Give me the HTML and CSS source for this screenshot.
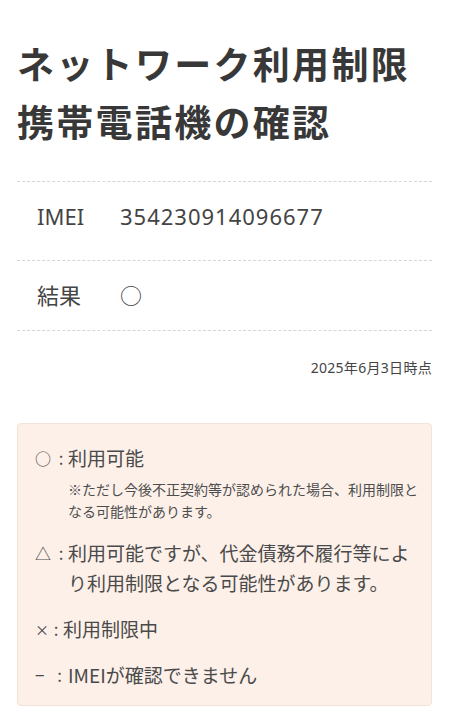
FILE: index.html
```html
<!DOCTYPE html>
<html lang="ja">
<head>
<meta charset="utf-8">
<title>ネットワーク利用制限携帯電話機の確認</title>
<link rel="stylesheet" href="styles.css">
</head>
<body>
<main class="page">
  <h1 class="title">ネットワーク利用制限<br>携帯電話機の確認</h1>

  <dl class="info">
    <div class="row row-imei">
      <dt class="label">IMEI</dt>
      <dd class="value value-num">354230914096677</dd>
    </div>
    <div class="row">
      <dt class="label">結果</dt>
      <dd class="value">○</dd>
    </div>
  </dl>

  <p class="date">2025年6月3日時点</p>

  <section class="legend">
    <div class="item">
      <span class="mark"><span class="sym">○</span><span class="colon">:</span></span>
      <div class="text">
        利用可能
        <p class="note">※ただし今後不正契約等が認められた場合、利用制限となる可能性があります。</p>
      </div>
    </div>
    <div class="item">
      <span class="mark"><span class="sym">△</span><span class="colon">:</span></span>
      <div class="text">利用可能ですが、代金債務不履行等により利用制限となる可能性があります。</div>
    </div>
    <div class="item">
      <span class="mark"><span class="sym sym-x">×</span><span class="colon">:</span></span>
      <div class="text">利用制限中</div>
    </div>
    <div class="item">
      <span class="mark"><span class="sym sym-dash">−</span><span class="colon">:</span></span>
      <div class="text">IMEIが確認できません</div>
    </div>
  </section>
</main>
</body>
</html>
```

FILE: styles.css
```css
* { box-sizing: border-box; }

html, body {
  margin: 0;
  padding: 0;
  background: #ffffff;
}

body {
  font-family: "Noto Sans", "Noto Sans CJK JP", sans-serif;
  color: #444444;
}

.page {
  padding: 34px 18px 0 17px;
}

.title {
  margin: 0;
  font-family: "Noto Sans CJK JP", sans-serif;
  font-size: 37px;
  font-weight: 700;
  line-height: 58px;
  letter-spacing: 2.3px;
  color: #383838;
}

.info {
  margin: 31px 0 0;
  border-top: 1px dashed #d6d6d6;
}

.row {
  display: flex;
  align-items: center;
  padding: 20px 0 21px;
  border-bottom: 1px dashed #d6d6d6;
}

.row-imei {
  padding-bottom: 30px;
}

.label {
  width: 103px;
  padding-left: 20px;
  margin: 0;
  font-size: 22px;
  line-height: 28px;
  color: #444444;
}

.value {
  margin: 0;
  font-size: 22px;
  line-height: 28px;
  color: #444444;
}

.value-num {
  letter-spacing: 1px;
}

.date {
  margin: 27px 0 0;
  text-align: right;
  font-size: 14px;
  line-height: 20px;
  letter-spacing: 0.3px;
  color: #444444;
}

.legend {
  margin-top: 45px;
  display: flex;
  flex-direction: column;
  gap: 16px;
  padding: 19px 8px 15px 17px;
  background: #fcf0e9;
  border: 1px solid #f3e2d8;
  border-radius: 4px;
  font-family: "Noto Sans CJK JP", sans-serif;
  color: #4a4a4a;
}

.item {
  display: flex;
  font-size: 19px;
  line-height: 30px;
}

.mark {
  display: flex;
  flex: none;
}

.sym {
  width: 19px;
  font-size: 16px;
}

.sym-x {
  width: 14px;
  font-size: 14px;
}

.sym-dash {
  width: 16px;
  font-size: 17px;
}

.colon {
  width: 14px;
  text-align: center;
  font-size: 17px;
}

.sym-dash + .colon {
  width: 17px;
}

.text {
  flex: 1;
  min-width: 0;
}

.note {
  margin: 5px 0 0;
  font-size: 14px;
  line-height: 22px;
  color: #4d4d4d;
}
```
